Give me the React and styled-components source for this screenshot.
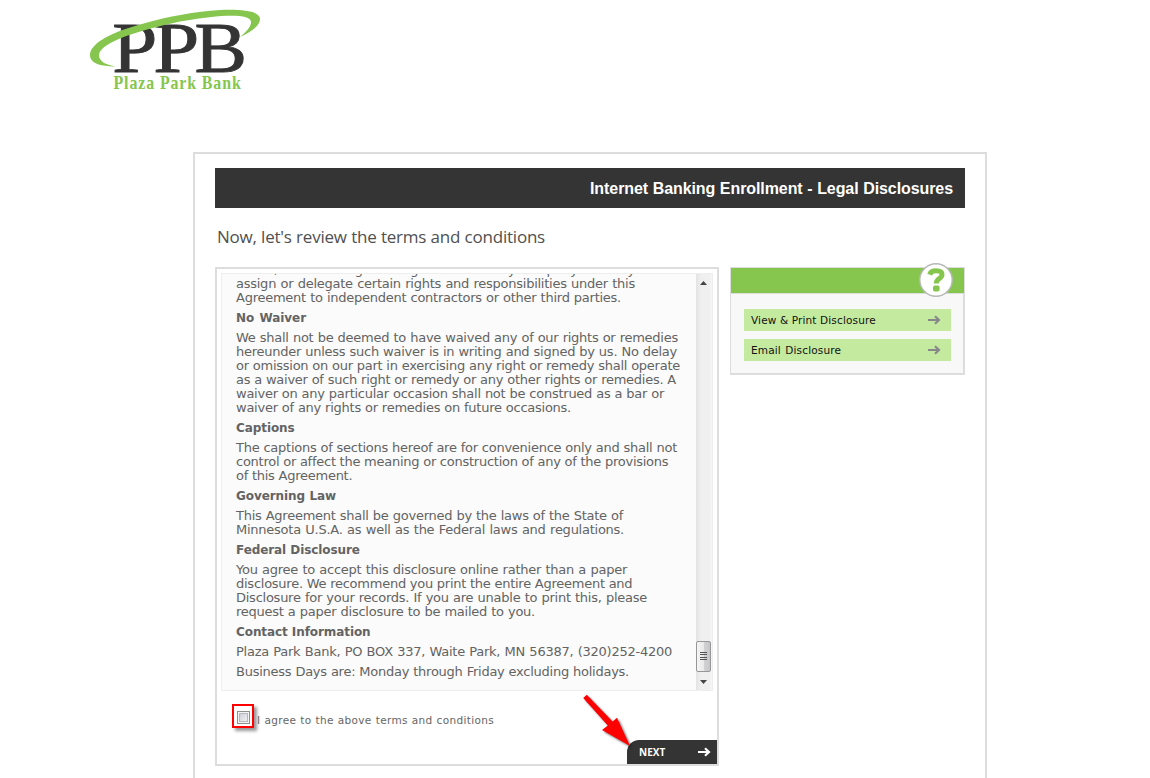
import React, { useState } from "react";
import styled, { createGlobalStyle } from "styled-components";

const terms = [
  {
    lines: [
      ["future, we can assign this Agreement to any company. We may", 399],
      ["assign or delegate certain rights and responsibilities under this", 399],
      ["Agreement to independent contractors or other third parties.", 385],
    ],
  },
  { title: true, lines: [["No Waiver", 70]] },
  {
    lines: [
      ["We shall not be deemed to have waived any of our rights or remedies", 442],
      ["hereunder unless such waiver is in writing and signed by us. No delay", 441],
      ["or omission on our part in exercising any right or remedy shall operate", 444],
      ["as a waiver of such right or remedy or any other rights or remedies. A", 440],
      ["waiver on any particular occasion shall not be construed as a bar or", 428],
      ["waiver of any rights or remedies on future occasions.", 335],
    ],
  },
  { title: true, lines: [["Captions", 57]] },
  {
    lines: [
      ["The captions of sections hereof are for convenience only and shall not", 441],
      ["control or affect the meaning or construction of any of the provisions", 432],
      ["of this Agreement.", 116],
    ],
  },
  { title: true, lines: [["Governing Law", 100]] },
  {
    lines: [
      ["This Agreement shall be governed by the laws of the State of", 387],
      ["Minnesota U.S.A. as well as the Federal laws and regulations.", 388],
    ],
  },
  { title: true, lines: [["Federal Disclosure", 123]] },
  {
    lines: [
      ["You agree to accept this disclosure online rather than a paper", 391],
      ["disclosure. We recommend you print the entire Agreement and", 396],
      ["Disclosure for your records. If you are unable to print this, please", 411],
      ["request a paper disclosure to be mailed to you.", 299],
    ],
  },
  { title: true, lines: [["Contact Information", 132]] },
  { lines: [["Plaza Park Bank, PO BOX 337, Waite Park, MN 56387, (320)252-4200", 436]] },
  { lines: [["Business Days are: Monday through Friday excluding holidays.", 393]] },
];

function Logo() {
  return (
    <LogoSvg viewBox="0 0 190 100" role="img" aria-label="Plaza Park Bank">
      <g fill="#343434" stroke="#343434" strokeWidth="0.9" fontSize="72.5" fontFamily="Liberation Serif, serif">
        <text x="32.2" y="71.9" textLength="45" lengthAdjust="spacingAndGlyphs">P</text>
        <text x="73.2" y="71.9" textLength="46" lengthAdjust="spacingAndGlyphs">P</text>
        <text x="114.5" y="71.9" textLength="52.5" lengthAdjust="spacingAndGlyphs">B</text>
      </g>
      <path
        fill="#86c64e"
        d="M36 66.3C20 67 9 63 10 54C12 42 33 32 60 24.5C90 16 115 11.5 140 10C162 9 180 11 180 19C180 26 171 32 160 37C167 31 171.5 26 171 21.5C170 14 145 13.5 100 21.5C60 30 20 42 19 55C19 61 25 65 36 66.3Z"
      />
      <text
        transform="translate(33.5 89) scale(0.86 1)"
        fill="#86c64e"
        fontSize="18.5"
        fontWeight="bold"
        fontFamily="Liberation Serif, serif"
        textLength="148"
        lengthAdjust="spacing"
      >
        Plaza Park Bank
      </text>
    </LogoSvg>
  );
}

function Arrow({ color }) {
  return (
    <svg width="14" height="10" viewBox="0 0 14 10" fill="none" stroke={color} strokeWidth="2.2">
      <path d="M1 5H12M8 1.2L12 5L8 8.8" />
    </svg>
  );
}

function ScrollBar() {
  return (
    <Track>
      <svg width="7" height="4" viewBox="0 0 7 4">
        <path d="M0 4L3.5 0L7 4Z" fill="#444" />
      </svg>
      <Thumb>
        <i />
        <i />
        <i />
        <i />
      </Thumb>
      <svg width="7" height="4" viewBox="0 0 7 4">
        <path d="M0 0H7L3.5 4Z" fill="#444" />
      </svg>
    </Track>
  );
}

function App() {
  const [agreed, setAgreed] = useState(false);

  return (
    <Page>
      <GlobalStyle />
      <Logo />
      <Card>
        <TitleBar>
          <Fit $width={363}>Internet Banking Enrollment - Legal Disclosures</Fit>
        </TitleBar>
        <Intro>
          <Fit $width={328}>Now, let's review the terms and conditions</Fit>
        </Intro>
        <Columns>
          <TermsBox>
            <Scroller>
              <Terms>
                {terms.map((block, i) => (
                  <Block key={i} $title={block.title}>
                    {block.lines.map(([text, width]) => (
                      <Fit key={text} $width={width}>
                        {text}
                      </Fit>
                    ))}
                  </Block>
                ))}
              </Terms>
              <ScrollBar />
            </Scroller>
            <Agree>
              <Highlight>
                <Check
                  type="checkbox"
                  id="agree"
                  checked={agreed}
                  onChange={() => setAgreed(!agreed)}
                />
              </Highlight>
              <label htmlFor="agree">
                <Fit $width={237}>I agree to the above terms and conditions</Fit>
              </label>
            </Agree>
            <NextButton>
              <span>NEXT</span>
              <Arrow color="#fff" />
            </NextButton>
            <Pointer viewBox="0 0 54 58">
              <path d="M3.2 5L6.8 1.8L32.6 28.5L37 24.7L50 53L22 37L27.8 32.4Z" fill="#fe0000" />
            </Pointer>
          </TermsBox>
          <Help>
            <HelpHead>
              <Badge viewBox="0 0 36 36">
                <circle cx="18" cy="18" r="16.2" fill="#fff" stroke="#b8b8b8" strokeWidth="1.4" />
                <path
                  d="M11.6 12.6C12.6 9.8 15 8.8 18 8.8C21.8 8.8 24 10.2 24 12.7C24 16.6 18.2 16.6 18.2 21.5"
                  fill="none"
                  stroke="#86c64e"
                  strokeWidth="5"
                />
                <rect x="15" y="23.6" width="6.6" height="6" rx="1.8" fill="#86c64e" />
              </Badge>
            </HelpHead>
            <HelpLink href="#print">
              <Fit $width={124}>View &amp; Print Disclosure</Fit>
              <Arrow color="#888" />
            </HelpLink>
            <HelpLink href="#email">
              <Fit $width={90}>Email Disclosure</Fit>
              <Arrow color="#888" />
            </HelpLink>
          </Help>
        </Columns>
      </Card>
    </Page>
  );
}

const GlobalStyle = createGlobalStyle`
  * {
    box-sizing: border-box;
  }

  body {
    margin: 0;
    background: #fff;
    overflow: hidden;
    font-family: Verdana, "DejaVu Sans", sans-serif;
  }
`;

const Page = styled.div`
  width: 1150px;
  height: 778px;
  overflow: hidden;
`;

const LogoSvg = styled.svg`
  display: block;
  width: 190px;
  height: 100px;
  margin-left: 80px;
`;

const Card = styled.main`
  width: 794px;
  height: 680px;
  margin: 52px 0 0 193px;
  padding: 14px 20px 0;
  border: 2px solid #ddd;
`;

/* one line of text, spread to a set width */
const Fit = styled.span`
  display: block;
  width: ${({ $width }) => $width}px;
  white-space: nowrap;
  text-align: justify;
  text-align-last: justify;
`;

const TitleBar = styled.header`
  display: flex;
  align-items: center;
  justify-content: flex-end;
  height: 40px;
  padding: 2px 12px 0 0;
  background: #343434;
  color: #fff;
  font: bold 16px "Liberation Sans", Arial, sans-serif;
  letter-spacing: -0.08px;
`;

const Intro = styled.h1`
  margin: 0;
  padding: 17px 0 0 2px;
  height: 59px;
  color: #505050;
  font: 17px/24px "Trebuchet MS", "Open Sans", sans-serif;
  letter-spacing: -0.22px;
`;

const Columns = styled.div`
  display: flex;
  align-items: flex-start;
  gap: 11px;
`;

const TermsBox = styled.section`
  position: relative;
  display: flex;
  flex-direction: column;
  width: 504px;
  height: 499px;
  padding: 4px 0 0 4px;
  border: 2px solid #ddd;
`;

const Scroller = styled.div`
  display: flex;
  flex: none;
  width: 492px;
  height: 418px;
  border: 1px solid #eee;
  background: #fbfbfb;
`;

const Terms = styled.div`
  display: flex;
  flex: 1;
  flex-direction: column;
  justify-content: flex-end;
  gap: 6px;
  overflow: hidden;
  padding: 0 0 11px 14px;
`;

const Block = styled.div`
  color: #636363;
  font-size: ${({ $title }) => ($title ? "12px" : "13px")};
  font-weight: ${({ $title }) => ($title ? "bold" : "normal")};
  line-height: 14px;
  letter-spacing: ${({ $title }) => ($title ? "-0.08px" : "-0.25px")};
`;

const Track = styled.div`
  display: flex;
  flex-direction: column;
  align-items: center;
  width: 16px;
  padding: 7px 1px 6px 0;
  background: linear-gradient(to right, #e3e3e3, #efefef 5px, #f0f0f0 14px, #f8f8f8);
`;

const Thumb = styled.div`
  display: flex;
  flex-direction: column;
  align-items: center;
  gap: 1px;
  width: 15px;
  height: 31px;
  margin: auto 0 8px;
  padding-top: 10px;
  border: 1px solid #979797;
  border-radius: 2px;
  background: linear-gradient(to right, #f5f5f5, #e9e9eb 50%, #d3d3d6 51%, #c6c6c9);

  i {
    width: 7px;
    height: 1px;
    margin-bottom: 0.4px;
    background: #555;
  }
`;

const Agree = styled.div`
  display: flex;
  align-items: flex-start;
  padding: 13px 0 0 11px;

  label {
    margin: 9px 0 0 3px;
    color: #666;
    font-size: 10.5px;
    line-height: 14px;
    letter-spacing: 0.34px;
  }
`;

const Highlight = styled.span`
  display: flex;
  width: 22px;
  height: 24px;
  padding: 5px 0 0 3px;
  border: 2px solid #f00;
  box-shadow: 3px 3px 3px rgba(0, 0, 0, 0.4);
`;

const Check = styled.input`
  appearance: none;
  width: 13px;
  height: 13px;
  margin: 0;
  border: 1px solid #8e8f8f;
  background: linear-gradient(135deg, #c5cad2, #f8f8f8);
  box-shadow: inset 0 0 0 1px #f4f4f4, inset 0 0 0 2px #b5b9be;

  &:checked {
    background: #4b6a94;
  }
`;

const NextButton = styled.button`
  display: flex;
  align-items: center;
  justify-content: space-between;
  width: 90px;
  height: 24px;
  margin: auto 0 0 auto;
  padding: 0 6px 0 12px;
  border: 0;
  border-top-left-radius: 12px;
  background: #343434;
  color: #fff;
  font: bold 10px "Open Sans", sans-serif;
`;

const Pointer = styled.svg`
  position: absolute;
  left: 363px;
  top: 424px;
  width: 54px;
  height: 58px;
  filter: drop-shadow(2px 2px 1px rgba(0, 0, 0, 0.5));
  pointer-events: none;
`;

const Help = styled.aside`
  display: flex;
  flex-direction: column;
  gap: 8px;
  width: 235px;
  height: 108px;
  border: 2px solid #ddd;
  border-width: 1px 2px 2px 1px;
  background: #f8f8f8;
`;

const HelpHead = styled.div`
  position: relative;
  height: 26px;
  margin: 0 -1px 7px 0;
  border-bottom: 1px solid #ddd;
  background: #86c64e;
`;

const Badge = styled.svg`
  position: absolute;
  right: 10px;
  top: -6px;
  width: 36px;
  height: 36px;
`;

const HelpLink = styled.a`
  display: flex;
  align-items: center;
  justify-content: space-between;
  height: 22px;
  margin: 0 12px 0 13px;
  padding: 0 10px 0 7px;
  background: #c4eaa0;
  color: #111;
  font-size: 10.5px;
  letter-spacing: 0.14px;
  text-decoration: none;
`;

export default App;
